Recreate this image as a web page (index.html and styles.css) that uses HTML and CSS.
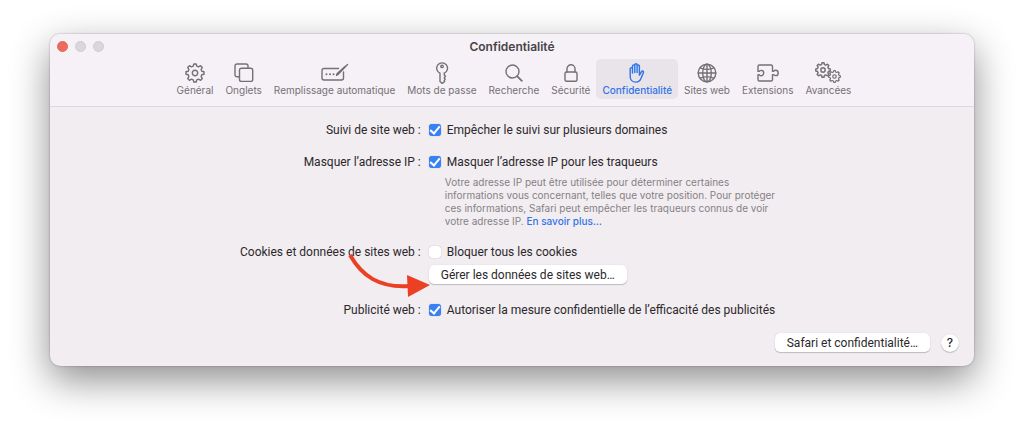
FILE: index.html
```html
<!DOCTYPE html>
<html lang="fr">
<head>
    <meta charset="UTF-8">
    <meta name="viewport" content="width=device-width, initial-scale=1.0">
    <title>Confidentialité</title>
    <link rel="stylesheet" href="styles.css">
</head>
<body>
    <svg class="defs" aria-hidden="true">
        <symbol id="gear" viewBox="-10 -10 20 20">
            <path d="M6.8-1.8 9-1.2 9 1.2 6.8 1.8 6.1 3.5 7.3 5.6 5.6 7.3 3.5 6.1 1.8 6.8 1.2 9-1.2 9-1.8 6.8-3.5 6.1-5.6 7.3-7.3 5.6-6.1 3.5-6.8 1.8-9 1.2-9-1.2-6.8-1.8-6.1-3.5-7.3-5.6-5.6-7.3-3.5-6.1-1.8-6.8-1.2-9 1.2-9 1.8-6.8 3.5-6.1 5.6-7.3 7.3-5.6 6.1-3.5z"/>
            <circle r="2.7"/>
        </symbol>
    </svg>
    <div class="window">
        <header class="header">
            <div class="titlebar">
                <div class="lights">
                    <button class="light close" aria-label="Fermer"></button>
                    <button class="light" aria-label="Réduire"></button>
                    <button class="light" aria-label="Agrandir"></button>
                </div>
                <h1>Confidentialité</h1>
            </div>
            <nav class="toolbar">
                <button class="tab">
                    <svg width="20" height="20"><use href="#gear"/></svg>
                    Général
                </button>
                <button class="tab">
                    <svg width="20" height="20" viewBox="0 0 20 20"><path d="M5.5 13.8H3A2 2 0 0 1 1 11.8V3a2 2 0 0 1 2-2h9a2 2 0 0 1 2 2v2"/><rect x="5.5" y="5.2" width="13.2" height="13.2" rx="2"/></svg>
                    Onglets
                </button>
                <button class="tab">
                    <svg width="28" height="20" viewBox="0 0 28 20"><path d="M17.5 5.5H3a2 2 0 0 0-2 2V15a2 2 0 0 0 2 2h17.5a2 2 0 0 0 2-2V9"/><path d="M17 11.5 26.5 1.5M17 11.5l-1.5.8.7-1.7L24 3.5"/><path class="dots" d="M5.5 11.3h0M9 11.3h0M12.5 11.3h0"/></svg>
                    Remplissage automatique
                </button>
                <button class="tab">
                    <svg width="14" height="22" viewBox="0 0 14 22"><path d="M5 11.2a5.4 5.4 0 1 1 4.2 0v1.6l1.3 1.5-1.3 1.5 1 1.3-1 1.4.5 1-2.5 2L5 19.5z"/><circle cx="7" cy="4.4" r="1.2"/></svg>
                    Mots de passe
                </button>
                <button class="tab">
                    <svg width="18" height="18" viewBox="0 0 18 18"><circle cx="7.5" cy="7.5" r="6.5"/><path class="thick" d="m12.3 12.3 4.5 4.5"/></svg>
                    Recherche
                </button>
                <button class="tab">
                    <svg width="14" height="18" viewBox="0 0 14 18"><rect x="1" y="8" width="12" height="9.2" rx="1.5"/><path d="M3 8V4.8a4 4 0 0 1 8 0V8"/></svg>
                    Sécurité
                </button>
                <button class="tab active">
                    <svg width="16" height="20" viewBox="0 0 16 20"><path d="M1.2 11V5.8a1.1 1.1 0 0 1 2.3 0V10M3.5 6V3a1.1 1.1 0 0 1 2.3 0v6.5M5.8 3V1.9a1.1 1.1 0 0 1 2.3 0v7.6M8.1 3.2a1.1 1.1 0 0 1 2.3 0v9l2-3.4c.8-1.3 2.6-.6 2 .8l-2.3 5.6c-1 2.5-2.7 3.9-5.2 3.9-3.6 0-5.7-2.4-5.7-5.7V11"/></svg>
                    Confidentialité
                </button>
                <button class="tab">
                    <svg width="20" height="20" viewBox="0 0 20 20"><circle cx="10" cy="10" r="8.8"/><ellipse cx="10" cy="10" rx="4.3" ry="8.8"/><path d="M10 1.2v17.6M1.2 10h17.6M3.3 4.8c3.8 1.8 9.6 1.8 13.4 0M3.3 15.2c3.8-1.8 9.6-1.8 13.4 0"/></svg>
                    Sites web
                </button>
                <button class="tab">
                    <svg width="24" height="20" viewBox="0 0 24 20"><path d="M2 7.7V3.5A1.5 1.5 0 0 1 3.5 2H15a1.5 1.5 0 0 1 1.5 1.5v4.7h1.3c.5-.7 1.1-1 1.9-1 1.5 0 2.5 1.2 2.5 2.7s-1 2.7-2.5 2.7c-.8 0-1.4-.3-1.9-1h-1.3v4.9A1.5 1.5 0 0 1 15 18H3.5A1.5 1.5 0 0 1 2 16.5v-4.7h1.3c.5.7 1.1 1 1.9 1 1.5 0 2.5-1.2 2.5-2.7s-1-2.7-2.5-2.7c-.8 0-1.4.3-1.9 1H2z"/></svg>
                    Extensions
                </button>
                <button class="tab">
                    <svg width="26" height="22" viewBox="0 0 26 22"><use class="small-gear" href="#gear" x="0" y="0" width="16" height="16"/><use class="small-gear" href="#gear" x="13" y="8" width="13" height="13"/></svg>
                    Avancées
                </button>
            </nav>
        </header>

        <main class="settings">
            <div class="label">Suivi de site web :</div>
            <div class="field">
                <label><input type="checkbox" checked>Empêcher le suivi sur plusieurs domaines</label>
            </div>

            <div class="label">Masquer l’adresse IP :</div>
            <div class="field">
                <label><input type="checkbox" checked>Masquer l’adresse IP pour les traqueurs</label>
                <p class="help">Votre adresse IP peut être utilisée pour déterminer certaines informations vous concernant, telles que votre position. Pour protéger ces informations, Safari peut empêcher les traqueurs connus de voir votre adresse IP. <a href="#">En savoir plus…</a></p>
            </div>

            <div class="label">Cookies et données de sites web :</div>
            <div class="field">
                <label><input type="checkbox">Bloquer tous les cookies</label>
                <button class="btn manage">Gérer les données de sites web…</button>
                <svg class="arrow" width="84" height="50" viewBox="0 0 84 50" aria-hidden="true">
                    <path class="curve" d="M3 5C15 26 32 38 62 36"/>
                    <path class="head" d="M60 25 83 35 61 47z"/>
                </svg>
            </div>

            <div class="label">Publicité web :</div>
            <div class="field">
                <label><input type="checkbox" checked>Autoriser la mesure confidentielle de l’efficacité des publicités</label>
            </div>
        </main>

        <footer class="footer">
            <button class="btn">Safari et confidentialité…</button>
            <button class="help-btn" aria-label="Aide">?</button>
        </footer>
    </div>
</body>
</html>
```
FILE: styles.css
```css
* {
    box-sizing: border-box;
}

body {
    margin: 0;
    padding: 34px 50px;
    min-height: 100vh;
    background: #ffffff;
    color: #2b282b;
    font-family: Inter, "Liberation Sans", sans-serif;
    font-size: 12px;
    line-height: 16px;
}

button {
    font: inherit;
    color: inherit;
    border: none;
    padding: 0;
    white-space: nowrap;
}

.defs {
    position: absolute;
    width: 0;
    height: 0;
}

.window {
    background: #f2edf1;
    border-radius: 10px;
    box-shadow: 0 0 2px rgba(0, 0, 0, 0.35), 0 14px 38px rgba(0, 0, 0, 0.45);
}

/* title bar and tabs */
.header {
    background: #f6f1f7;
    border-bottom: 1px solid #dcd7dc;
    border-radius: 10px 10px 0 0;
    padding-bottom: 7px;
}

.titlebar {
    display: grid;
    grid-template-columns: 1fr auto 1fr;
    align-items: center;
    height: 25px;
    padding: 0 7px;
}

.titlebar h1 {
    margin: 0;
    font-size: 12px;
    font-weight: 600;
    color: #484448;
}

.lights {
    display: flex;
    gap: 7px;
}

.light {
    width: 11px;
    height: 11px;
    border-radius: 50%;
    background: #dbd6dc;
    border: 1px solid #d0cbd1;
}

.light.close {
    background: #ed6a5e;
    border-color: #e2675b;
}

.toolbar {
    display: flex;
    justify-content: center;
    padding-left: 4px;
}

.tab {
    display: grid;
    grid-template-rows: 22px 12px;
    place-items: center;
    padding: 3px 6px;
    border-radius: 5px;
    background: none;
    color: #747074;
    font-size: 10px;
    line-height: 12px;
}

.tab svg {
    fill: none;
    stroke: currentColor;
    stroke-width: 1.4;
    stroke-linecap: round;
    stroke-linejoin: round;
}

.tab .thick {
    stroke-width: 1.8;
}

.tab .dots {
    stroke-width: 2;
}

.tab .small-gear {
    stroke-width: 1.8;
}

.tab.active {
    background: #e9e4ea;
    color: #2f74e8;
    font-weight: 500;
}

/* form */
.settings {
    display: grid;
    grid-template-columns: 68fr 100fr;
    gap: 16px 8px;
    padding-top: 15px;
}

.label,
.field label,
.btn {
    font-family: Roboto, "Liberation Sans", sans-serif;
}

.label {
    text-align: right;
}

.field {
    position: relative;
}

.field label {
    display: flex;
    align-items: center;
    gap: 6px;
}

input[type="checkbox"] {
    appearance: none;
    width: 12px;
    height: 12px;
    margin: 0;
    border-radius: 3px;
    background: #ffffff;
    box-shadow: 0 0 1px rgba(0, 0, 0, 0.4);
}

input[type="checkbox"]:checked {
    display: grid;
    place-items: center;
    background: #3780f6;
}

input[type="checkbox"]:checked::before {
    content: "";
    width: 4px;
    height: 8px;
    margin-bottom: 2px;
    border: solid #ffffff;
    border-width: 0 2px 2px 0;
    transform: rotate(40deg);
}

.help {
    max-width: 352px;
    margin: 6px 0 0;
    padding-left: 16px;
    font-size: 10px;
    line-height: 13px;
    color: #858185;
}

.help a {
    color: #2f74e8;
    font-weight: 500;
    text-decoration: none;
}

.btn {
    height: 19px;
    padding: 0 12px;
    border-radius: 5px;
    background: #ffffff;
    box-shadow: 0 1px 1px rgba(0, 0, 0, 0.2), 0 0 1px rgba(0, 0, 0, 0.2);
}

.manage {
    display: block;
    margin: 5px 0 2px;
}

.arrow {
    position: absolute;
    top: 6px;
    left: -82px;
}

.arrow .curve {
    fill: none;
    stroke: #ec4025;
    stroke-width: 4;
}

.arrow .head {
    fill: #ec4025;
}

.footer {
    display: flex;
    justify-content: flex-end;
    align-items: center;
    gap: 11px;
    padding: 15px 15px 14px;
}

.help-btn {
    width: 18px;
    height: 18px;
    border-radius: 50%;
    background: #ffffff;
    box-shadow: 0 1px 1px rgba(0, 0, 0, 0.2), 0 0 1px rgba(0, 0, 0, 0.2);
    font-weight: 500;
}
```
